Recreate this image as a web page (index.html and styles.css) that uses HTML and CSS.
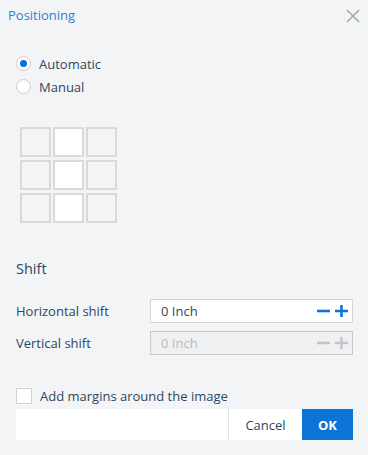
FILE: index.html
```html
<!DOCTYPE html>
<html lang="en">
<head>
    <meta charset="UTF-8">
    <title>Positioning</title>
    <link rel="stylesheet" href="styles.css">
</head>
<body>
    <div class="dialog">
        <div class="header">
            <span class="title">Positioning</span>
            <svg class="close" width="14" height="14" viewBox="0 0 14 14">
                <path d="M1 1 L13 13 M13 1 L1 13" stroke="#a4acac" stroke-width="1.6" fill="none"/>
            </svg>
        </div>

        <div class="content">
            <label class="radio-row"><span class="radio checked"></span>Automatic</label>
            <label class="radio-row"><span class="radio"></span>Manual</label>

            <div class="grid">
                <div class="cell"></div><div class="cell white"></div><div class="cell"></div>
                <div class="cell"></div><div class="cell white"></div><div class="cell"></div>
                <div class="cell"></div><div class="cell white"></div><div class="cell"></div>
            </div>

            <h2 class="section">Shift</h2>

            <div class="field">
                <span class="label">Horizontal shift</span>
                <div class="spin">
                    <span class="value">0 Inch</span>
                    <svg class="btn" width="14" height="14" viewBox="0 0 14 14"><path d="M0 7 H13" stroke="currentColor" stroke-width="2.6"/></svg>
                    <svg class="btn" width="14" height="14" viewBox="0 0 14 14"><path d="M0 7 H13 M6.5 1 V13" stroke="currentColor" stroke-width="2.6"/></svg>
                </div>
            </div>
            <div class="field">
                <span class="label">Vertical shift</span>
                <div class="spin disabled">
                    <span class="value">0 Inch</span>
                    <svg class="btn" width="14" height="14" viewBox="0 0 14 14"><path d="M0 7 H13" stroke="currentColor" stroke-width="2.6"/></svg>
                    <svg class="btn" width="14" height="14" viewBox="0 0 14 14"><path d="M0 7 H13 M6.5 1 V13" stroke="currentColor" stroke-width="2.6"/></svg>
                </div>
            </div>

            <label class="check-row"><span class="checkbox"></span>Add margins around the image</label>

            <div class="footer">
                <div class="spacer"></div>
                <button class="cancel">Cancel</button>
                <button class="ok">OK</button>
            </div>
        </div>
    </div>
</body>
</html>
```

FILE: styles.css
```css
body {
    margin: 0;
    background-color: #f3f4f6;
    font-family: "Open Sans", "Noto Sans", sans-serif;
    font-size: 13px;
    color: #2e4660;
}
.dialog {
    width: 368px;
    height: 455px;
}
.header {
    display: flex;
    justify-content: space-between;
    align-items: center;
    padding: 5px 8px 0 8px;
    height: 20px;
}
.title {
    color: #2a80d2;
    font-size: 13px;
}
.close {
    margin-top: 1px;
}
.content {
    padding: 0 15px 0 16px;
}
.radio-row {
    display: flex;
    align-items: center;
    height: 23px;
}
.radio-row:first-child {
    margin-top: 27px;
}
.radio {
    width: 13px;
    height: 13px;
    border: 1px solid #c9cbcd;
    border-radius: 50%;
    background: white;
    margin-right: 8px;
    position: relative;
}
.radio.checked::after {
    content: "";
    position: absolute;
    left: 3px;
    top: 3px;
    width: 7px;
    height: 7px;
    border-radius: 50%;
    background: #0b6fd3;
}
.grid {
    display: grid;
    grid-template-columns: repeat(3, 31px);
    grid-auto-rows: 30px;
    column-gap: 2px;
    row-gap: 3px;
    margin: 29px 0 0 4px;
}
.cell {
    border: 2px solid #d7d9da;
    box-sizing: border-box;
}
.cell.white {
    background: white;
}
.section {
    font-weight: normal;
    font-size: 14.5px;
    margin: 36px 0 0 0;
    height: 20px;
    line-height: 20px;
}
.field {
    display: flex;
    align-items: center;
    margin-top: 8px;
}
.section + .field {
    margin-top: 20px;
}
.label {
    width: 134px;
}
.spin {
    display: flex;
    align-items: center;
    width: 203px;
    height: 24px;
    box-sizing: border-box;
    background: white;
    border: 1px solid #d3d5d7;
    padding: 0 3px 0 10px;
    color: #0b74d5;
}
.spin .value {
    flex: 1;
    color: #2e4660;
}
.spin .btn {
    margin-left: 4px;
}
.spin.disabled {
    background: #eff0f2;
    border-color: #c6c8ca;
    color: #c2c5c8;
}
.spin.disabled .value {
    color: #b8bbbf;
}
.check-row {
    display: flex;
    align-items: center;
    margin-top: 33px;
    height: 16px;
}
.checkbox {
    width: 14px;
    height: 14px;
    border: 1px solid #d0d2d4;
    background: white;
    margin-right: 8px;
}
.footer {
    display: flex;
    height: 31px;
    margin-top: 5px;
    background: white;
    width: 337px;
}
.spacer {
    flex: 1;
    border-right: 1px solid #e0e2e4;
}
button {
    border: none;
    font-family: inherit;
    font-size: 13px;
    cursor: pointer;
}
.cancel {
    width: 73px;
    background: white;
    color: #2e4660;
}
.ok {
    width: 51px;
    background: #0b74d5;
    color: white;
    font-weight: bold;
}
```
